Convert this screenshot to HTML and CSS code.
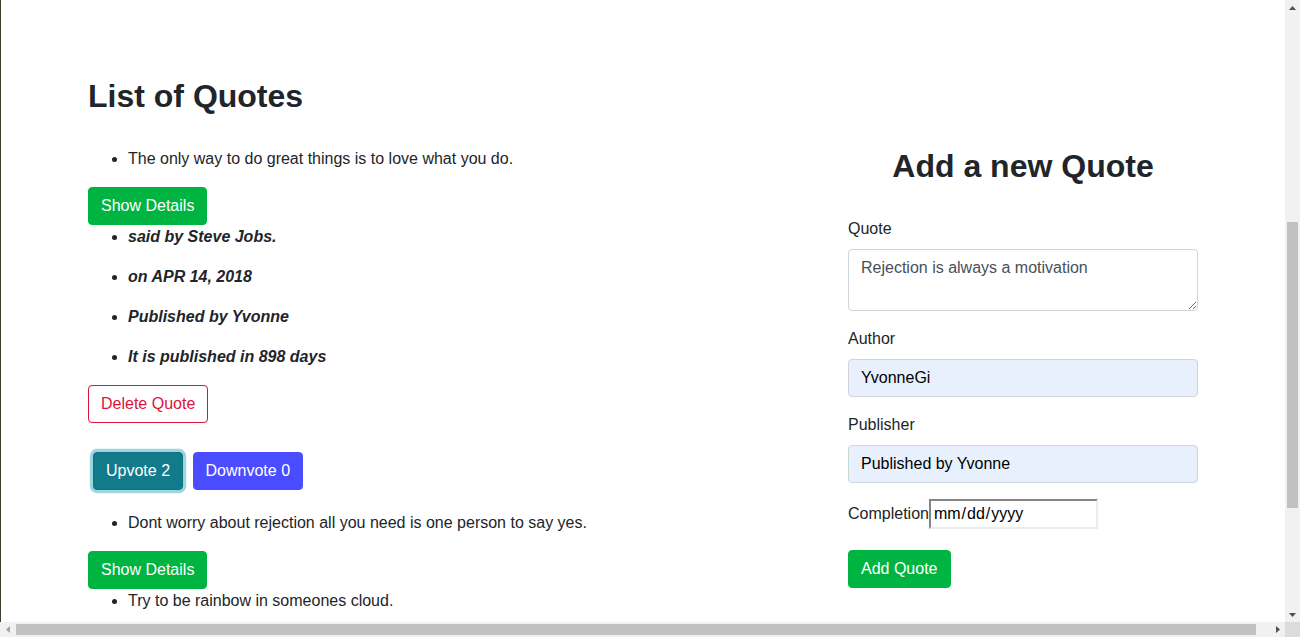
FILE: index.html
```html
<!DOCTYPE html>
<html lang="en">
<head>
<meta charset="utf-8">
<title>Quotes</title>
<link rel="stylesheet" href="styles.css">
</head>
<body>
<div class="window">
  <main class="viewport">
    <div class="container">
      <div class="col col-list">
        <h2 class="heading">List of Quotes</h2>

        <ul class="quote-text"><li>The only way to do great things is to love what you do.</li></ul>
        <button class="btn btn-green" type="button">Show Details</button>
        <ul class="details">
          <li>said by Steve Jobs.</li>
          <li>on APR 14, 2018</li>
          <li>Published by Yvonne</li>
          <li>It is published in 898 days</li>
        </ul>
        <button class="btn btn-outline-red" type="button">Delete Quote</button>
        <div class="votes">
          <button class="btn btn-up" type="button">Upvote 2</button>
          <button class="btn btn-down" type="button">Downvote 0</button>
        </div>

        <ul class="quote-text"><li>Dont worry about rejection all you need is one person to say yes.</li></ul>
        <button class="btn btn-green" type="button">Show Details</button>

        <ul class="quote-text"><li>Try to be rainbow in someones cloud.</li></ul>
      </div>

      <div class="col col-form">
        <h2 class="heading heading-center">Add a new Quote</h2>
        <form class="quote-form">
          <div class="form-group">
            <label class="label" for="quote">Quote</label>
            <textarea class="form-control textarea" id="quote" rows="2">Rejection is always a motivation</textarea>
          </div>
          <div class="form-group">
            <label class="label" for="author">Author</label>
            <input class="form-control autofilled" id="author" type="text" value="YvonneGi">
          </div>
          <div class="form-group">
            <label class="label" for="publisher">Publisher</label>
            <input class="form-control autofilled" id="publisher" type="text" value="Published by Yvonne">
          </div>
          <div class="date-row"><label for="completion">Completion</label><input class="date-input" id="completion" type="date"></div>
          <button class="btn btn-green" type="button">Add Quote</button>
        </form>
      </div>
    </div>
  </main>

  <div class="vscroll" aria-hidden="true">
    <div class="arrow-box">
      <svg width="7" height="4" viewBox="0 0 7 4"><path d="M0 4 L3.5 0 L7 4 Z" fill="#505050"/></svg>
    </div>
    <div class="vtrack"><div class="vthumb"></div></div>
    <div class="arrow-box">
      <svg width="7" height="4" viewBox="0 0 7 4"><path d="M0 0 L3.5 4 L7 0 Z" fill="#505050"/></svg>
    </div>
  </div>

  <div class="hscroll" aria-hidden="true">
    <div class="arrow-box">
      <svg width="4" height="7" viewBox="0 0 4 7"><path d="M4 0 L0 3.5 L4 7 Z" fill="#a3a3a3"/></svg>
    </div>
    <div class="htrack"><div class="hthumb"></div></div>
    <div class="arrow-box">
      <svg width="4" height="7" viewBox="0 0 4 7"><path d="M0 0 L4 3.5 L0 7 Z" fill="#505050"/></svg>
    </div>
  </div>

  <div class="corner"></div>
</div>
</body>
</html>
```

FILE: styles.css
```css
* {
  box-sizing: border-box;
}

html,
body {
  height: 100%;
}

body {
  margin: 0;
  font-family: "Liberation Sans", Arial, Helvetica, sans-serif;
  font-size: 16px;
  line-height: 1.5;
  color: #212529;
  background: #fff;
  overflow: hidden;
}

.window {
  display: grid;
  grid-template-columns: 1fr 15px;
  grid-template-rows: 622px 15px;
  height: 637px;
}

.viewport {
  overflow: hidden;
  border-left: 1px solid #403b2f;
  background: #fff;
}

/* scrollbars */
.vscroll {
  display: flex;
  flex-direction: column;
  background: #f1f1f1;
}

.hscroll {
  display: flex;
  background: #f1f1f1;
}

.arrow-box {
  flex: 0 0 15px;
  height: 15px;
  display: flex;
  align-items: center;
  justify-content: center;
}

.vtrack {
  flex: 1;
  padding: 207px 2px 0;
}

.vthumb {
  height: 286px;
  background: #c1c1c1;
}

.htrack {
  flex: 1;
  padding: 2px 14px 2px 1px;
}

.hthumb {
  height: 11px;
  background: #c1c1c1;
}

.corner {
  background: #dcdcdc;
}

/* page */
.container {
  width: 1140px;
  margin: 0 auto;
  padding-top: 77px;
  display: flex;
  align-items: flex-start;
}

.col {
  padding: 0 15px;
}

.col-list {
  width: 760px;
}

.col-form {
  width: 380px;
  padding-top: 70px;
}

.heading {
  margin: 0 0 32px;
  font-size: 32px;
  font-weight: 700;
  line-height: 1.2;
}

.heading-center {
  text-align: center;
}

.quote-text {
  margin: 0 0 16px;
  padding-left: 40px;
}

.details {
  margin: 0;
  padding-left: 40px;
  font-weight: 700;
  font-style: italic;
}

.details li {
  margin-bottom: 16px;
}

.btn {
  display: inline-block;
  font-family: inherit;
  font-size: 16px;
  line-height: 24px;
  padding: 6px 12px;
  border: 1px solid transparent;
  border-radius: 4px;
  color: #fff;
  background: transparent;
  cursor: pointer;
  vertical-align: middle;
}

.btn-green {
  background: #00b441;
  border-color: #00b441;
}

.btn-outline-red {
  color: #dc143c;
  border-color: #dc143c;
  background: #fff;
}

.votes {
  display: flex;
  gap: 9.5px;
  padding-left: 5px;
  margin: 29px 0 21px;
}

.btn-up {
  background: #117a8b;
  border-color: #10707f;
  box-shadow: 0 0 0 3.2px rgba(58, 176, 195, 0.5);
}

.btn-down {
  background: #4b4bff;
  border-color: #4b4bff;
}

.form-group {
  margin-bottom: 16px;
}

.label {
  display: inline-block;
  margin-bottom: 8px;
}

.form-control {
  display: block;
  width: 100%;
  font-family: inherit;
  font-size: 16px;
  line-height: 24px;
  padding: 6px 12px;
  border: 1px solid #ced4da;
  border-radius: 4px;
  color: #495057;
  background: #fff;
  margin: 0;
}

.textarea {
  height: 62px;
  resize: vertical;
  overflow: auto;
}

.autofilled {
  height: 38px;
  background: #e8f0fe;
  color: #000;
}

.date-row {
  margin-bottom: 21px;
  line-height: 24px;
}

.date-input {
  width: 169px;
  height: 30px;
  margin: 0;
  padding: 1px 2px;
  font-family: inherit;
  font-size: 16px;
  line-height: 24px;
  color: #000;
  background: #fff;
  border-width: 2px;
  border-style: solid;
  border-color: #858585 #ececec #ececec #858585;
  border-radius: 0;
  vertical-align: baseline;
}

.date-input::-webkit-calendar-picker-indicator {
  display: none;
}

.date-input::-webkit-datetime-edit {
  padding: 0;
}

.date-input::-webkit-datetime-edit-fields-wrapper {
  padding: 0;
}
```
